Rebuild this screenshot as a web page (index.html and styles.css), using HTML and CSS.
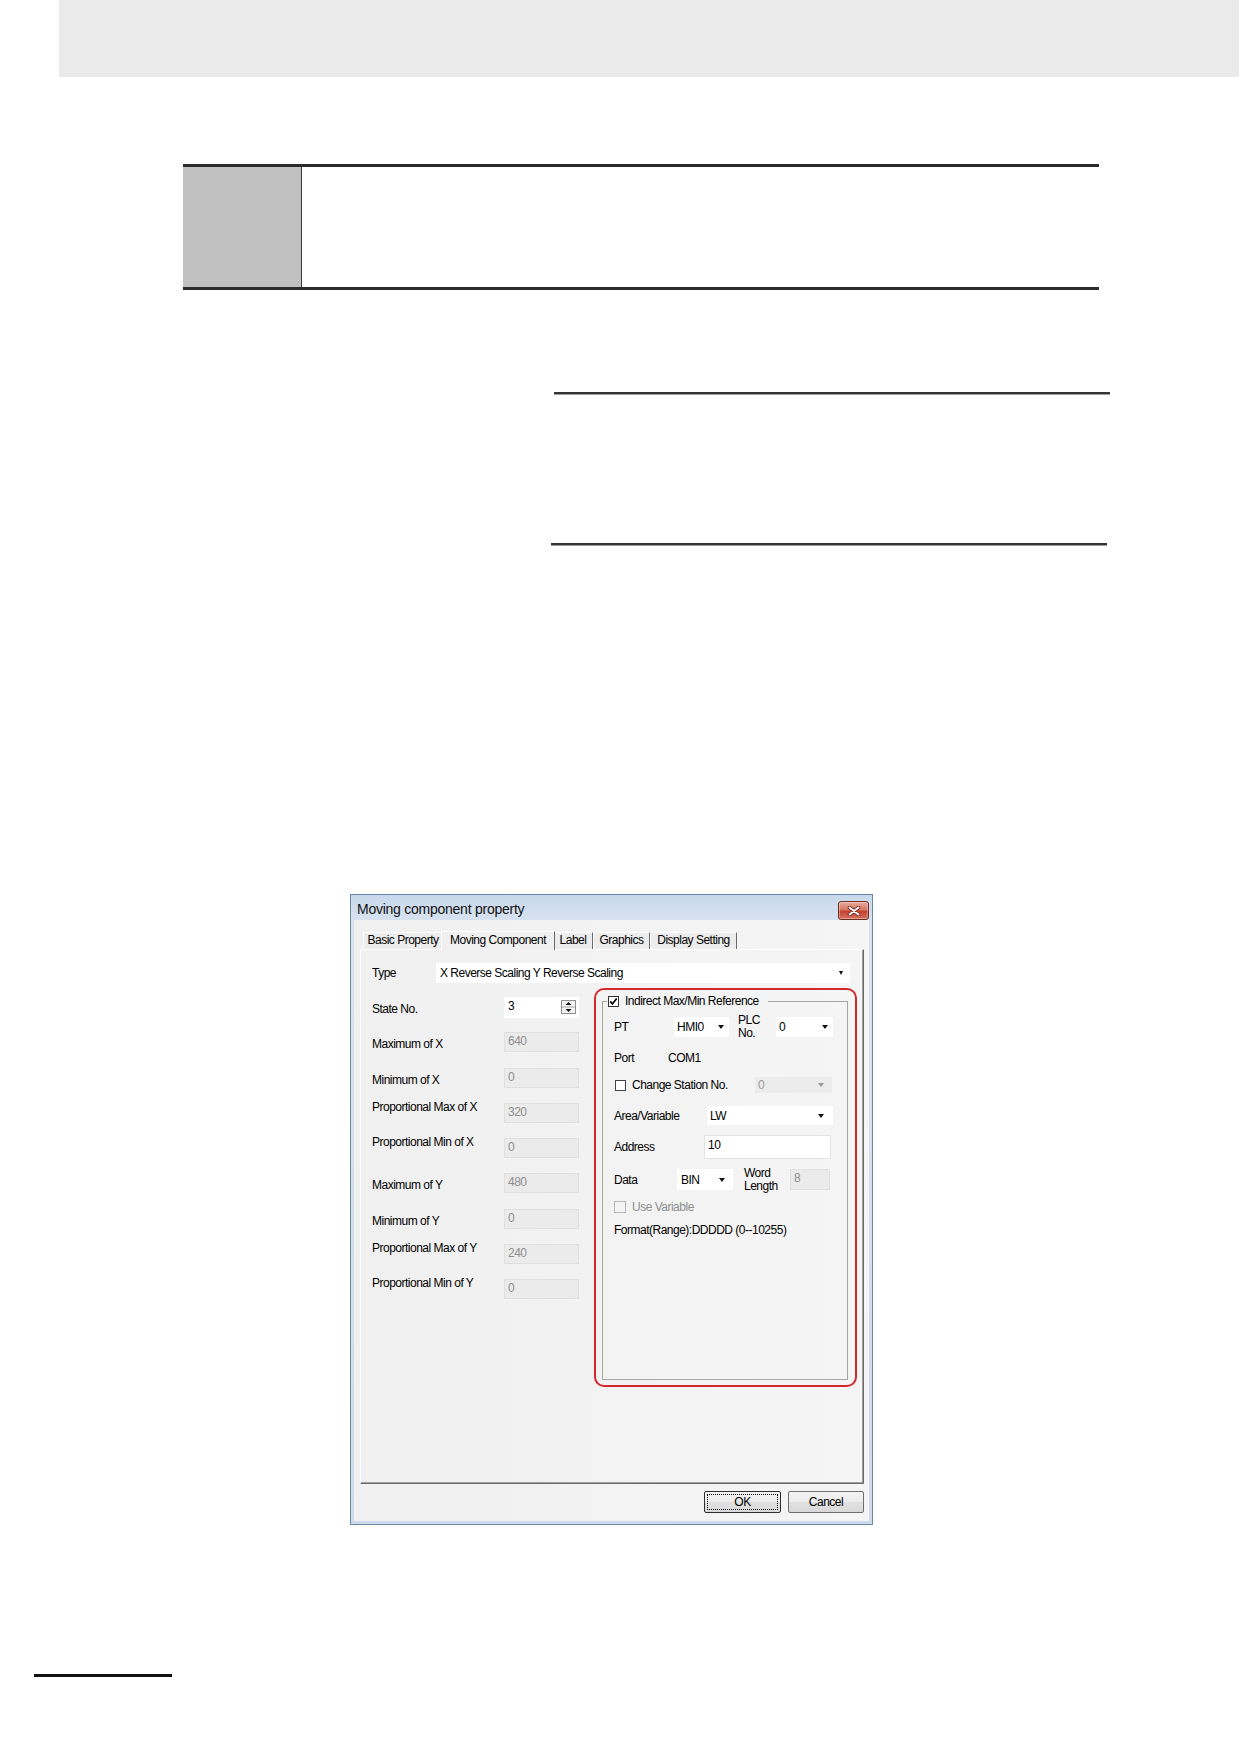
FILE: index.html
```html
<!DOCTYPE html>
<html lang="en">
<head>
    <meta charset="UTF-8">
    <meta name="viewport" content="width=device-width, initial-scale=1.0">
    <title>Moving Component - Indirect Max/Min Reference</title>
    <link rel="stylesheet" href="styles.css">
</head>
<body>
<div class="page">
    <div class="page-band"></div>

    <div class="step">
        <div class="step-mark"></div>
        <div class="step-body"></div>
    </div>

    <div class="note-rule note-top"></div>
    <div class="note-rule note-bottom"></div>

    <!-- Property dialog -->
    <div class="dialog">
        <div class="titlebar">
            <span class="title">Moving component property</span>
            <span class="close-btn">
                <svg width="14" height="10" viewBox="0 0 14 10">
                    <path d="M2.5 1.5 L11.5 8.5 M11.5 1.5 L2.5 8.5" stroke="#7b2c22" stroke-width="3.6" stroke-linecap="round"/>
                    <path d="M2.5 1.5 L11.5 8.5 M11.5 1.5 L2.5 8.5" stroke="#fff" stroke-width="1.8" stroke-linecap="round"/>
                </svg>
            </span>
        </div>

        <div class="dialog-body">
            <div class="tabs">
                <span class="tab tab-basic">Basic Property</span>
                <span class="tab tab-moving active">Moving Component</span>
                <span class="tab tab-label">Label</span>
                <span class="tab tab-graphics">Graphics</span>
                <span class="tab tab-display">Display Setting</span>
            </div>

            <div class="tab-page">
                <div class="type-row">
                    <span class="type-label">Type</span>
                    <span class="combo type-combo">
                        <span class="combo-text">X Reverse Scaling Y Reverse Scaling</span>
                        <span class="arrow small"></span>
                    </span>
                </div>

                <div class="columns">
                    <div class="range-list">
                        <div class="range-row">
                            <span class="range-label">State No.</span>
                            <span class="field state-field">
                                <span class="field-text">3</span>
                                <svg class="spinner" width="15" height="14" viewBox="0 0 15 14">
                                    <rect x="0.5" y="0.5" width="14" height="13" fill="#f4f4f4" stroke="#8f8f8f"/>
                                    <line x1="1" y1="7" x2="14" y2="7" stroke="#a8a8a8"/>
                                    <path d="M4.5 5 h6 l-3 -3 z" fill="#111"/>
                                    <path d="M4.5 9 h6 l-3 3 z" fill="#111"/>
                                </svg>
                            </span>
                        </div>
                        <div class="range-row">
                            <span class="range-label">Maximum of X</span>
                            <span class="field off">640</span>
                        </div>
                        <div class="range-row">
                            <span class="range-label">Minimum of X</span>
                            <span class="field off">0</span>
                        </div>
                        <div class="range-row">
                            <span class="range-label high">Proportional Max of X</span>
                            <span class="field off">320</span>
                        </div>
                        <div class="range-row">
                            <span class="range-label high">Proportional Min of X</span>
                            <span class="field off">0</span>
                        </div>
                        <div class="range-row">
                            <span class="range-label">Maximum of Y</span>
                            <span class="field off">480</span>
                        </div>
                        <div class="range-row">
                            <span class="range-label">Minimum of Y</span>
                            <span class="field off">0</span>
                        </div>
                        <div class="range-row">
                            <span class="range-label high">Proportional Max of Y</span>
                            <span class="field off">240</span>
                        </div>
                        <div class="range-row">
                            <span class="range-label high">Proportional Min of Y</span>
                            <span class="field off">0</span>
                        </div>
                    </div>

                    <div class="highlight">
                        <fieldset class="group">
                            <legend class="group-legend">
                                <svg class="check" width="11" height="11" viewBox="0 0 11 11">
                                    <rect x="0.5" y="0.5" width="10" height="10" fill="#fff" stroke="#333"/>
                                    <path d="M2.3 5.4 L4.4 7.9 L8.7 2.4" fill="none" stroke="#000" stroke-width="1.7"/>
                                </svg>
                                <span>Indirect Max/Min Reference</span>
                            </legend>

                            <div class="g-row row-pt">
                                <span class="g-label w-pt">PT</span>
                                <span class="combo hmi-combo"><span class="combo-text">HMI0</span><span class="arrow"></span></span>
                                <span class="two-line plc">PLC<br>No.</span>
                                <span class="combo plc-combo"><span class="combo-text">0</span><span class="arrow"></span></span>
                            </div>

                            <div class="g-row row-port">
                                <span class="g-label w-port">Port</span>
                                <span>COM1</span>
                            </div>

                            <div class="g-row row-station">
                                <svg class="check box-only" width="11" height="11" viewBox="0 0 11 11">
                                    <rect x="0.5" y="0.5" width="10" height="10" fill="#fff" stroke="#444"/>
                                </svg>
                                <span class="g-label w-station">Change Station No.</span>
                                <span class="combo station-combo off"><span class="combo-text">0</span><span class="arrow dim"></span></span>
                            </div>

                            <div class="g-row row-area">
                                <span class="g-label w-area">Area/Variable</span>
                                <span class="combo area-combo"><span class="combo-text">LW</span><span class="arrow"></span></span>
                            </div>

                            <div class="g-row row-address">
                                <span class="g-label w-address">Address</span>
                                <span class="address-field">10</span>
                            </div>

                            <div class="g-row row-data">
                                <span class="g-label w-data">Data</span>
                                <span class="combo bin-combo"><span class="combo-text">BIN</span><span class="arrow"></span></span>
                                <span class="two-line word">Word<br>Length</span>
                                <span class="field off word-field">8</span>
                            </div>

                            <div class="g-row row-usevar">
                                <svg class="check box-only" width="12" height="12" viewBox="0 0 12 12">
                                    <rect x="0.5" y="0.5" width="11" height="11" fill="#f4f4f4" stroke="#b8b8b8"/>
                                </svg>
                                <span class="muted">Use Variable</span>
                            </div>

                            <div class="g-row row-format">
                                <span>Format(Range):DDDDD (0--10255)</span>
                            </div>
                        </fieldset>
                    </div>
                </div>
            </div>

            <div class="buttons">
                <span class="btn btn-default">OK</span>
                <span class="btn">Cancel</span>
            </div>
        </div>
    </div>

    <div class="foot-rule"></div>
</div>
</body>
</html>
```

FILE: styles.css
```css
* {
    box-sizing: border-box;
}

body {
    margin: 0;
    background: #fff;
    color: #000;
    font-family: "Liberation Sans", Arial, sans-serif;
}

.page {
    width: 1239px;
    min-height: 1754px;
    overflow: hidden;
}

/* page decorations */
.page-band {
    height: 77px;
    margin-left: 59px;
    background: #eaeaea;
}

.step {
    display: flex;
    width: 916px;
    height: 126px;
    margin: 87px 0 0 183px;
    border-top: 3px solid #2b2b2b;
    border-bottom: 3px solid #2b2b2b;
}

.step-mark {
    width: 119px;
    background: #c0c0c0;
    border-right: 1px solid #3a3a3a;
}

.step-body {
    flex: 1;
}

.note-rule {
    width: 556px;
    height: 3px;
    border-top: 2px solid #333;
    border-bottom: 1px solid #9c9c9c;
}

.note-top {
    margin: 102px 0 0 554px;
}

.note-bottom {
    margin: 148px 0 0 551px;
}

.foot-rule {
    width: 138px;
    height: 3px;
    margin: 149px 0 0 34px;
    background: #111;
}

/* dialog window */
.dialog {
    display: flex;
    flex-direction: column;
    width: 523px;
    height: 631px;
    margin: 348px 0 0 350px;
    padding: 0 3px 3px;
    border: 1px solid #6d89a9;
    background: linear-gradient(#c8d8ec, #d8e3f0 26px, #cddbec);
    font-size: 12px;
    letter-spacing: -0.5px;
}

.titlebar {
    display: flex;
    justify-content: space-between;
    height: 25px;
    padding-left: 3px;
}

.title {
    margin-top: 5px;
    font-size: 14px;
    line-height: 18px;
    letter-spacing: -0.25px;
    color: #111;
}

.close-btn {
    display: flex;
    align-items: center;
    justify-content: center;
    align-self: flex-end;
    width: 31px;
    height: 19px;
    border: 1px solid #6e2b22;
    border-radius: 3px;
    background: linear-gradient(#e7a99b, #d77866 45%, #c4402f 55%, #d6715e);
    box-shadow: inset 0 0 0 1px rgba(255, 255, 255, 0.35);
}

.dialog-body {
    flex: 1;
    display: flex;
    flex-direction: column;
    padding: 11px 5px 0 6px;
    background: linear-gradient(to right, #f0f0f0, #f5f5f5);
}

/* tabs */
.tabs {
    display: flex;
    align-items: flex-end;
    height: 18px;
    padding-left: 3px;
}

.tab {
    height: 17px;
    line-height: 15px;
    text-align: center;
    white-space: nowrap;
    background: #ececec;
    border: 1px solid #fff;
    border-right-color: #6a6a6a;
    border-bottom: none;
}

.tab.active {
    position: relative;
    z-index: 1;
    height: 19px;
    margin: 0 -2px -1px;
    background: #f0f0f0;
    line-height: 16px;
}

.tab-basic { width: 80px; }
.tab-moving { width: 114px; }
.tab-label { width: 40px; }
.tab-graphics { width: 57px; }
.tab-display { width: 87px; }

.tab-page {
    height: 535px;
    padding: 13px 0 0 11px;
    border: 1px solid #fff;
    border-right-color: #696969;
    border-bottom-color: #696969;
    box-shadow: inset -1px -1px #a0a0a0;
}

.type-row {
    display: flex;
    align-items: center;
    height: 20px;
}

.type-label {
    width: 64px;
}

.combo {
    display: flex;
    align-items: center;
    height: 20px;
    padding: 0 5px 0 3px;
    background: #fff;
    white-space: nowrap;
}

.combo-text {
    flex: 1;
}

.type-combo {
    width: 414px;
    padding: 0 7px 0 4px;
}

.arrow {
    width: 0;
    height: 0;
    border-left: 3.5px solid transparent;
    border-right: 3.5px solid transparent;
    border-top: 4px solid #111;
}

.arrow.small {
    border-left-width: 2.5px;
    border-right-width: 2.5px;
    border-top-width: 4px;
}

.arrow.dim {
    border-top-color: #9a9a9a;
}

/* left column of range fields */
.columns {
    display: flex;
    margin-top: 5px;
}

.range-list {
    width: 222px;
    padding-top: 9px;
}

.range-row {
    display: flex;
    align-items: flex-start;
    height: 35.25px;
}

.range-label {
    width: 132px;
    margin-top: 5px;
    line-height: 14px;
    white-space: nowrap;
}

.range-label.high {
    margin-top: -3px;
}

.field {
    display: flex;
    width: 75px;
    height: 20px;
    padding: 2px 0 0 4px;
    line-height: 14px;
}

.field.off {
    color: #8e8e8e;
    background: #ebebeb;
    border: 1px solid #e0e0e0;
    padding: 1px 0 0 3px;
}

.state-field {
    height: 21px;
    background: #fff;
    padding-right: 3px;
}

.field-text {
    flex: 1;
}

.spinner {
    margin-top: 1px;
}

/* highlighted group */
.highlight {
    width: 263px;
    height: 399px;
    padding: 4px 7px 5px 6px;
    border: 2px solid #d3282e;
    border-radius: 10px;
}

.group {
    height: 100%;
    min-width: 0;
    margin: 0;
    padding: 9px 8px 0 4px;
    border: 1px solid #a6a6a6;
}

.group-legend {
    display: flex;
    align-items: center;
    gap: 6px;
    height: 14px;
    padding: 0 9px 0 1px;
    line-height: 14px;
}

.check {
    flex: none;
}

.g-row {
    display: flex;
    align-items: center;
    padding-left: 7px;
    line-height: 14px;
    white-space: nowrap;
}

.g-label {
    flex: none;
}

.w-pt { width: 60px; }
.w-port { width: 54px; }
.w-station { width: 123px; }
.w-area { width: 93px; }
.w-address { width: 90px; }
.w-data { width: 63px; }

.row-pt { height: 20px; }
.row-port { height: 16px; margin-top: 13px; }
.row-station { height: 16px; margin-top: 11px; }
.row-area { height: 19px; margin-top: 13px; }
.row-address { height: 24px; margin-top: 10px; }
.row-data { height: 21px; margin-top: 10px; }
.row-usevar { height: 14px; margin-top: 10px; }
.row-format { height: 14px; margin-top: 9px; }

.row-station .check,
.row-usevar .check {
    margin: 0 6px 0 1px;
}

.row-usevar .check {
    margin-left: 0;
}

.hmi-combo {
    width: 55px;
}

.plc-combo {
    width: 57px;
}

.two-line {
    line-height: 13px;
}

.plc {
    width: 38px;
    margin-left: 9px;
}

.station-combo {
    width: 77px;
    height: 16px;
    background: #ececec;
    color: #9a9a9a;
    padding-right: 8px;
}

.area-combo {
    width: 126px;
    height: 19px;
    padding-right: 9px;
}

.address-field {
    align-self: stretch;
    width: 127px;
    padding: 2px 0 0 3px;
    background: #fff;
    border: 1px solid #e3e3e3;
}

.bin-combo {
    width: 56px;
    height: 21px;
    padding: 0 8px 0 4px;
}

.word {
    width: 46px;
    margin-left: 11px;
}

.word-field {
    width: 40px;
    height: 21px;
}

.muted {
    color: #8e8e8e;
}

/* dialog buttons */
.buttons {
    display: flex;
    justify-content: flex-end;
    gap: 7px;
    margin-top: 7px;
}

.btn {
    width: 76px;
    height: 22px;
    line-height: 20px;
    text-align: center;
    border: 1px solid #707070;
    border-radius: 2px;
    background: linear-gradient(#f3f3f3, #ececec 50%, #e0e0e0 51%, #d9d9d9);
}

.btn-default {
    width: 77px;
    border-color: #2f2f2f;
    outline: 1px dotted #000;
    outline-offset: -4px;
}
```
